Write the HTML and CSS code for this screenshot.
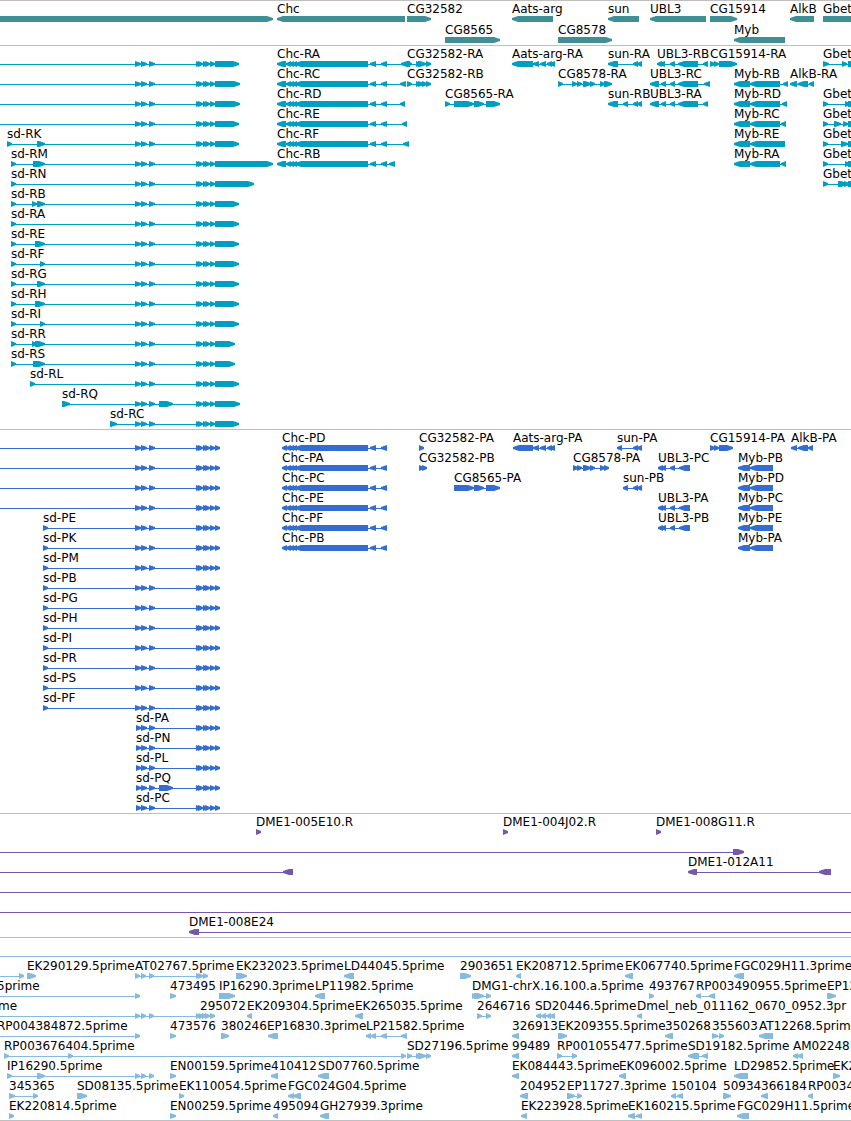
FILE: index.html
```html
<!DOCTYPE html>
<html lang="en">

<head>
    <meta charset="UTF-8">
    <meta name="viewport" content="width=device-width, initial-scale=1.0">
    <title>Genome tracks</title>
    <link rel="stylesheet" href="styles.css">
</head>

<body>
    <main class="tracks">
        <section class="track genes" id="genes"></section>
        <section class="track transcripts" id="transcripts"></section>
        <section class="track proteins" id="proteins"></section>
        <section class="track clones" id="clones"></section>
        <section class="track ests" id="ests"></section>
    </main>
    <script src="script.js"></script>
</body>

</html>
```

FILE: styles.css
```css
body {
    margin: 0;
    background-color: #fff;
    font-family: "DejaVu Sans", Verdana, sans-serif;
    font-size: 12px;
}

.tracks {
    display: flex;
    flex-direction: column;
    border-bottom: 1px solid #bfbfbf;
    overflow: hidden;
}

.track {
    border-top: 1px solid #bfbfbf;
}

.track svg {
    display: block;
    width: 100%;
}

.label {
    fill: #000;
}

.intron {
    shape-rendering: crispEdges;
}

.genes {
    color: #3f8f95;
}

.transcripts {
    color: #009fc2;
}

.proteins {
    color: #326dcf;
}

.clones {
    color: #7558a8;
}

.ests {
    color: #87bbdd;
}
```

FILE: script.js
```js
// Each feature: [row, strand, label, label x, exons "start-end ..."]
// Exons outside the window only carry the intron line to the edge.
var genes = [
    [0, '+', '', 0, '-20-273'],
    [0, '-', 'Chc', 277, '277-405'],
    [0, '+', 'CG32582', 407, '407-431'],
    [1, '+', 'CG8565', 445, '445-500'],
    [0, '-', 'Aats-arg', 512, '512-553'],
    [1, '+', 'CG8578', 558, '558-612'],
    [0, '-', 'sun', 608, '608-639'],
    [0, '-', 'UBL3', 650, '650-706'],
    [0, '+', 'CG15914', 710, '710-737'],
    [1, '-', 'Myb', 734, '734-785'],
    [0, '-', 'AlkB', 790, '790-814'],
    [0, '+', 'Gbet', 823, '823-4000']
];

var sdMid = ' 135-141 141-147 149-155';
var sdEnd = ' 196-201 198-203 203-208 205-210 210-215';

var transcripts = [
    [0, '-', 'Chc-RA', 277, chc('401-410')],
    [1, '-', 'Chc-RC', 277, chc('400-406')],
    [2, '-', 'Chc-RD', 277, chc('400-405')],
    [3, '-', 'Chc-RE', 277, chc('402-407')],
    [4, '-', 'Chc-RF', 277, chc('403-409')],
    [5, '-', 'Chc-RB', 277, chc('389-395')],
    [0, '+', 'CG32582-RA', 407, '407-412 416-421 418-426 426-431'],
    [1, '+', 'CG32582-RB', 407, '407-412 416-421 418-424 422-427 426-431'],
    [2, '+', 'CG8565-RA', 445, '445-450 454-474 474-484 486-500'],
    [0, '-', 'Aats-arg-RA', 512, '512-533 533-539 540-546 547-552 550-555'],
    [1, '+', 'CG8578-RA', 558, '558-563 572-577 577-582 583-591 590-595 600-605 604-612'],
    [0, '-', 'sun-RA', 608, '608-618 633-638 637-642'],
    [2, '-', 'sun-RB', 608, '608-618 623-628 633-638 637-642'],
    [0, '-', 'UBL3-RB', 657, '657-662 660-665 670-675 678-698 703-708'],
    [1, '-', 'UBL3-RC', 650, '650-659 661-666 670-675 678-698 704-710'],
    [2, '-', 'UBL3-RA', 650, '650-659 661-666 670-675 678-698 703-708'],
    [0, '+', 'CG15914-RA', 710, '710-715 714-719 719-737'],
    [1, '-', 'Myb-RB', 734, '734-750 750-780 783-788'],
    [2, '-', 'Myb-RD', 734, '734-750 750-780 782-787'],
    [3, '-', 'Myb-RC', 734, '734-750 750-780 781-786'],
    [4, '-', 'Myb-RE', 734, '734-750 750-785'],
    [5, '-', 'Myb-RA', 734, '734-750 750-780 781-786'],
    [1, '-', 'AlkB-RA', 790, '790-797 798-808 809-814'],
    [0, '+', 'Gbet', 823, '823-829 842-847 848-4000'],
    [2, '+', 'Gbet', 823, '823-828 845-850 848-4000'],
    [3, '+', 'Gbet', 823, '823-828 834-841 843-848 848-4000'],
    [4, '+', 'Gbet', 823, '823-828 841-848 848-4000'],
    [5, '+', 'Gbet', 823, '823-828 845-850 848-4000'],
    [6, '+', 'Gbet', 823, '823-828 838-847 844-850 848-4000']
];

// sd transcripts: [label, label x, leading exons, end of the last exon]
[
    ['', 0, '-20--10', 239],
    ['', 0, '-20--10', 240],
    ['', 0, '-20--10', 240],
    ['', 0, '-20--10', 239],
    ['sd-RK', 7, '7-12 37-45', 239],
    ['sd-RM', 11, '11-16 33-45', 273],
    ['sd-RN', 11, '11-16', 254],
    ['sd-RB', 11, '11-16 32-37 37-45', 239],
    ['sd-RA', 11, '11-16', 239],
    ['sd-RE', 11, '11-16 35-45', 239],
    ['sd-RF', 11, '11-16 40-45', 239],
    ['sd-RG', 11, '11-16 37-45', 239],
    ['sd-RH', 11, '11-16 35-45', 239],
    ['sd-RI', 11, '11-16 40-45', 239],
    ['sd-RR', 11, '11-16 32-37 35-45', 235],
    ['sd-RS', 11, '11-16 33-45', 235],
    ['sd-RL', 30, '30-35', 239],
    ['sd-RQ', 62, '62-70 159-173', 240],
    ['sd-RC', 110, '110-117', 239]
].forEach(function (sd, row) {
    transcripts.push([row, '+', sd[0], sd[1], sd[2] + sdMid + sdEnd + ' 215-' + sd[3]]);
});

var proteins = [
    [0, '+', 'CG32582-PA', 419, '419-424'],
    [1, '+', 'CG32582-PB', 419, '419-424 422-427'],
    [2, '+', 'CG8565-PA', 454, '454-474 474-484 486-500'],
    [0, '-', 'Aats-arg-PA', 513, '513-533 533-539 540-546 547-552 550-555'],
    [1, '+', 'CG8578-PA', 573, '573-578 577-582 583-591 590-595 600-605 604-609'],
    [0, '-', 'sun-PA', 617, '617-622 633-638 637-642'],
    [2, '-', 'sun-PB', 623, '623-628 633-638 637-642'],
    [0, '+', 'CG15914-PA', 710, '710-715 714-719 719-733'],
    [0, '-', 'AlkB-PA', 791, '791-797 798-808 808-813']
];

['PD', 'PA', 'PC', 'PE', 'PF', 'PB'].forEach(function (name, row) {
    proteins.push([row, '-', 'Chc-' + name, 282, '282-287 286-291 289-294 292-297 295-368 370-376 381-387']);
});
['PB', 'PD', 'PC', 'PE', 'PA'].forEach(function (name, i) {
    proteins.push([i + 1, '-', 'Myb-' + name, 738, '738-750 750-773']);
});
[[1, 'PC'], [3, 'PA'], [4, 'PB']].forEach(function (p) {
    proteins.push([p[0], '-', 'UBL3-' + p[1], 658, '658-663 661-666 670-675 679-690']);
});
['', '', '', '', 'PE', 'PK', 'PM', 'PB', 'PG', 'PH', 'PI', 'PR', 'PS', 'PF'].forEach(function (name, row) {
    proteins.push([row, '+', name && 'sd-' + name, 43, (name ? '43-48' : '-20--10') + sdMid + sdEnd + ' 215-220']);
});
['PA', 'PN', 'PL', 'PQ', 'PC'].forEach(function (name, i) {
    var extra = name === 'PQ' ? ' 159-173' : '';
    proteins.push([i + 14, '+', 'sd-' + name, 136, '136-141 141-147 149-155' + extra + sdEnd + ' 215-220']);
});

var clones = [
    [0, '+', 'DME1-005E10.R', 256, '256-261'],
    [0, '+', 'DME1-004J02.R', 503, '503-508'],
    [0, '+', 'DME1-008G11.R', 656, '656-661'],
    [1, '+', '', 0, '-20--10 733-744'],
    [2, '-', '', 0, '-20--10 283-293'],
    [2, '-', 'DME1-012A11', 688, '688-697 819-831'],
    [3, '+', '', 0, '-20--10 4000-4010'],
    [4, '+', '', 0, '-20--10 4000-4010'],
    [5, '-', 'DME1-008E24', 189, '189-199 4000-4010']
];

var ests = [
    [0, '+', '', 0, '-20--10 4000-4010'],

    [1, '+', '', 0, '-20--10 19-24'],
    [1, '+', 'EK290129.5prime', 27, '27-36'],
    [1, '+', 'AT02767.5prime', 135, '135-140 141-146 149-154 196-201 198-203 203-208'],
    [1, '+', 'EK232023.5prime', 236, '236-247'],
    [1, '-', 'LD44045.5prime', 344, '344-354'],
    [1, '+', '2903651', 460, '460-471'],
    [1, '-', 'EK208712.5prime', 516, '516-521'],
    [1, '-', 'EK067740.5prime', 625, '625-633'],
    [1, '-', 'FGC029H11.3prime', 734, '734-744'],

    [2, '+', '5prime', -3, '-20--10 135-140'],
    [2, '+', '473495', 170, '170-176'],
    [2, '+', 'IP16290.3prime', 219, '219-235'],
    [2, '-', 'LP11982.5prime', 315, '315-325'],
    [2, '+', 'DMG1-chrX.16.100.a.5prime', 472, '472-477 474-484 486-491'],
    [2, '+', '493767', 649, '649-654'],
    [2, '-', 'RP003490955.5prime', 696, '696-701 709-715'],
    [2, '+', 'EP12', 827, '827-836'],

    [3, '+', 'me', -2, '-20--10 135-140 141-146 149-154 196-201'],
    [3, '+', '295072', 200, '199-204 202-207 205-210 210-215'],
    [3, '-', 'EK209304.5prime', 247, '247-252'],
    [3, '-', 'EK265035.5prime', 355, '355-363'],
    [3, '+', '2646716', 477, '477-482 486-491'],
    [3, '-', 'SD20446.5prime', 535, '536-541 541-546 546-551 550-555'],
    [3, '-', 'Dmel_neb_011162_0670_0952.3pr', 637, '637-642'],

    [4, '+', 'RP004384872.5prime', -3, '-20--10 135-140'],
    [4, '+', '473576', 170, '170-176'],
    [4, '+', '380246', 221, '221-229'],
    [4, '-', 'EP16830.3prime', 267, '268-278'],
    [4, '-', 'LP21582.5prime', 366, '366-371 371-376 381-387 401-407'],
    [4, '-', '326913', 512, '512-519'],
    [4, '+', 'EK209355.5prime', 558, '558-567'],
    [4, '-', '350268', 665, '665-673'],
    [4, '+', '355603', 712, '712-718 719-724'],
    [4, '-', 'AT12268.5prime', 759, '759-773'],

    [5, '+', 'RP003676404.5prime', 4, '4-9 68-73 401-406'],
    [5, '+', 'SD27196.5prime', 407, '407-412 416-421 418-426 426-431'],
    [5, '-', '99489', 512, '512-519'],
    [5, '+', 'RP001055477.5prime', 557, '557-562 572-577'],
    [5, '-', 'SD19182.5prime', 688, '688-699 702-708'],
    [5, '-', 'AM02248', 793, '793-798 797-803'],

    [6, '+', 'IP16290.5prime', 7, '7-12 37-45 135-140 141-146 149-154'],
    [6, '+', 'EN00159.5prime', 170, '170-176'],
    [6, '-', '410412', 271, '271-278'],
    [6, '-', 'SD07760.5prime', 318, '318-329'],
    [6, '-', 'EK084443.5prime', 512, '512-519'],
    [6, '-', 'EK096002.5prime', 619, '619-626'],
    [6, '-', 'LD29852.5prime', 734, '734-748'],
    [6, '+', 'EK2', 833, '833-840'],

    [7, '+', '345365', 9, '9-15 33-38'],
    [7, '+', 'SD08135.5prime', 77, '77-87'],
    [7, '+', 'EK110054.5prime', 179, '179-184'],
    [7, '-', 'FGC024G04.5prime', 288, '288-294 293-301'],
    [7, '-', '204952', 520, '520-528'],
    [7, '+', 'EP11727.3prime', 567, '567-575 577-582'],
    [7, '-', '150104', 671, '671-676 677-683'],
    [7, '+', '50934', 723, '723-731'],
    [7, '-', '366184', 761, '761-768'],
    [7, '-', 'RP0034', 808, '808-813'],

    [8, '+', 'EK220814.5prime', 9, '9-14'],
    [8, '+', 'EN00259.5prime', 170, '170-176'],
    [8, '-', '495094', 273, '273-278'],
    [8, '-', 'GH27939.3prime', 320, '320-329'],
    [8, '-', 'EK223928.5prime', 521, '521-527'],
    [8, '-', 'EK160215.5prime', 628, '628-635 636-642'],
    [8, '-', 'FGC029H11.5prime', 737, '737-749']
];

function chc(last) {
    return '277-286 286-291 289-294 292-297 295-368 370-376 381-387 ' + last;
}

function add(parent, tag, attrs) {
    var el = document.createElementNS('http://www.w3.org/2000/svg', tag);
    for (var key in attrs) {
        el.setAttribute(key, attrs[key]);
    }
    parent.appendChild(el);
    return el;
}

// Exon box with a blunt arrow head in the direction of the strand
function exonPath(start, end, strand, top) {
    var tip = strand === '+' ? end : start;
    var back = strand === '+' ? start : end;
    var head = Math.min(end - start, 6);
    var neck = strand === '+' ? tip - head : tip + head;
    return 'M' + back + ' ' + top + 'H' + neck + 'L' + tip + ' ' + (top + 2) + 'V' + (top + 4) +
        'L' + neck + ' ' + (top + 6) + 'H' + back + 'Z';
}

function drawTrack(id, features, rowHeight, height) {
    var svg = add(document.getElementById(id), 'svg', { height: height });

    features.forEach(function (f) {
        var top = f[0] * rowHeight + 15;
        var exons = f[4].split(' ').map(function (e) {
            var m = e.match(/^(-?\d+)-(-?\d+)$/);
            return [Number(m[1]), Number(m[2])];
        });
        // sd-RQ and sd-PQ list their extra exon out of order
        var first = Math.min.apply(null, exons.map(function (e) { return e[0]; }));
        var last = Math.max.apply(null, exons.map(function (e) { return e[1]; }));

        if (exons.length > 1) {
            add(svg, 'rect', { 'class': 'intron', x: first, y: top + 3, width: last - first, height: 1, fill: 'currentColor' });
        }
        exons.forEach(function (e) {
            add(svg, 'path', { d: exonPath(e[0], e[1], f[1], top), fill: 'currentColor' });
        });
        if (f[2]) {
            add(svg, 'text', { 'class': 'label', x: f[3], y: top - 3 }).textContent = f[2];
        }
    });
}

drawTrack('genes', genes, 21, 44);
drawTrack('transcripts', transcripts, 20, 383);
drawTrack('proteins', proteins, 20, 383);
drawTrack('clones', clones, 20, 123);
drawTrack('ests', ests, 20, 182);
```
